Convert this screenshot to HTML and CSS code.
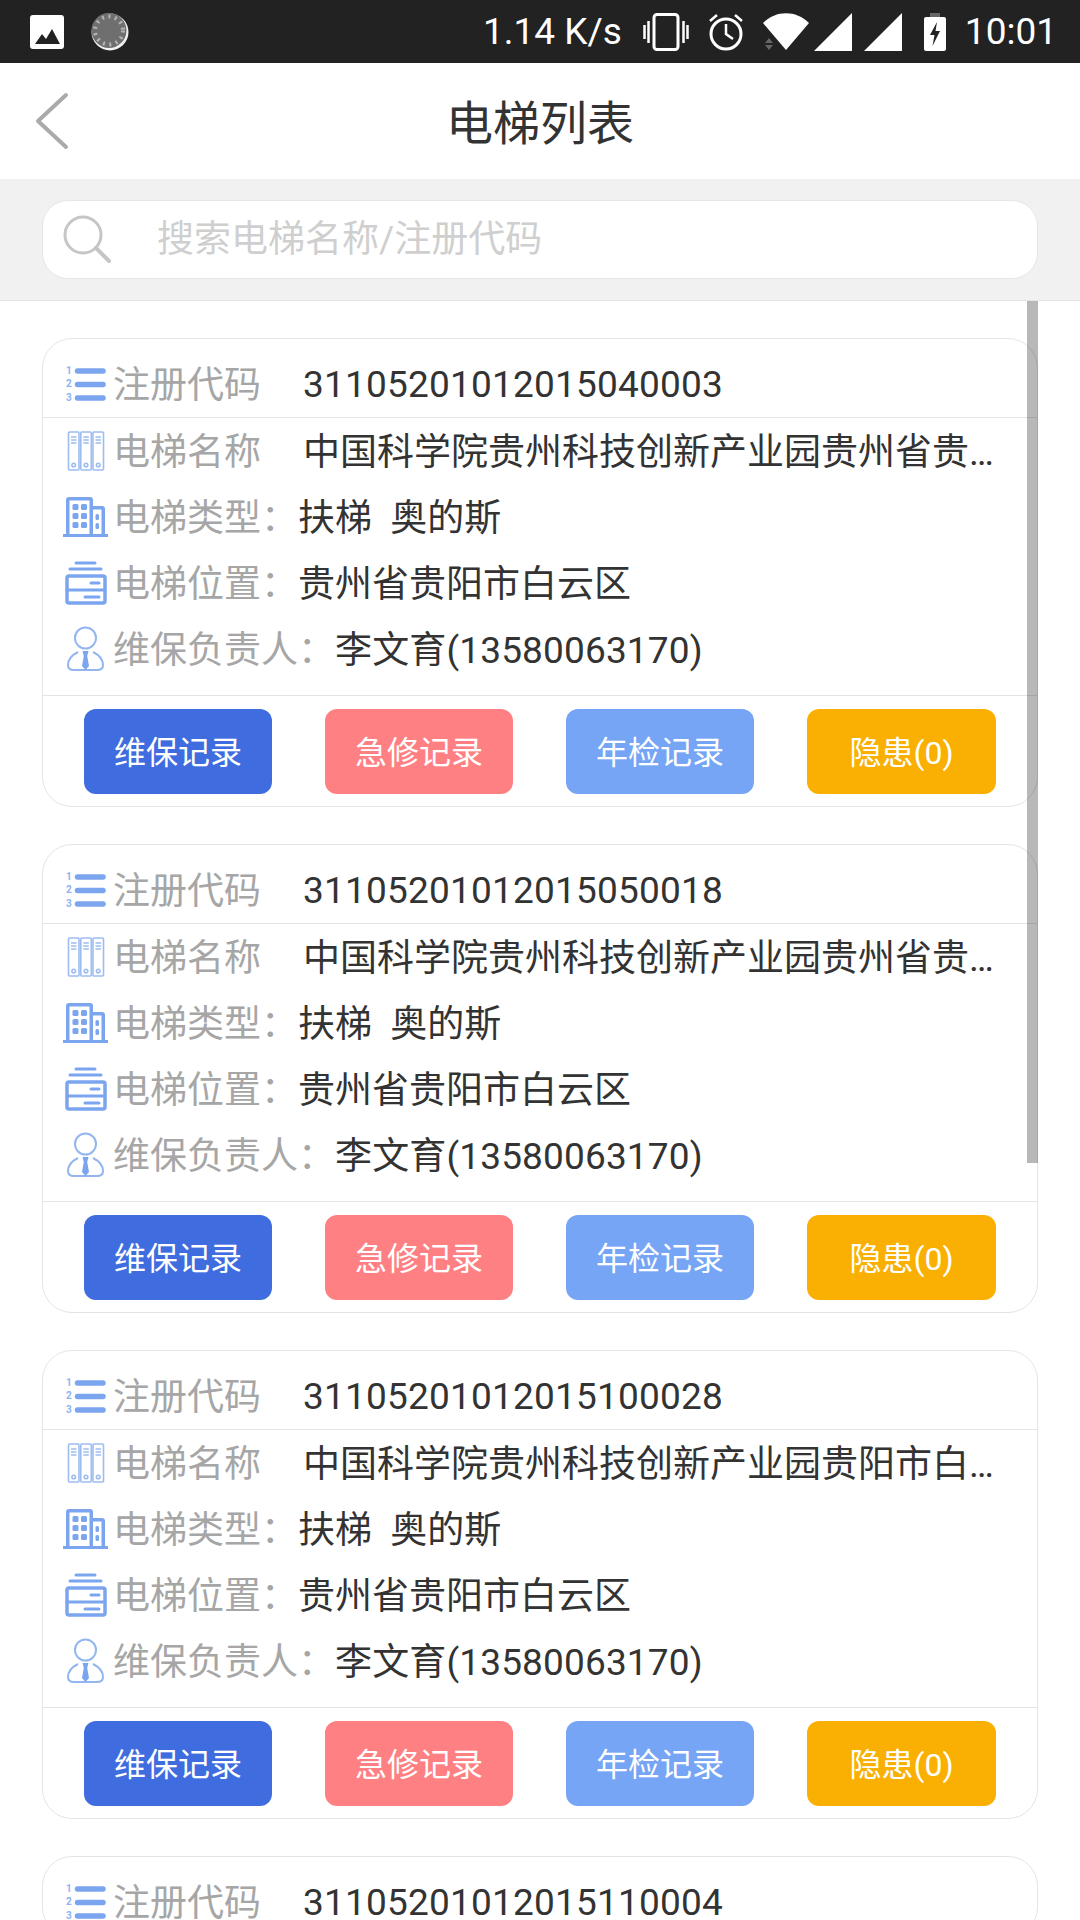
FILE: index.html
```html
<!DOCTYPE html>
<html lang="zh-CN">
<head>
    <meta charset="UTF-8">
    <meta name="viewport" content="width=device-width, initial-scale=1.0">
    <title>电梯列表</title>
    <link rel="stylesheet" href="styles.css">
</head>
<body>
    <!-- Иконки строк карточки -->
    <svg class="icon-defs" aria-hidden="true">
        <symbol id="i-list" viewBox="0 0 48 48">
            <g fill="#8fb3f0" font-family="Roboto, sans-serif" font-size="10" font-weight="700">
                <text x="4" y="14">1</text>
                <text x="4" y="27">2</text>
                <text x="4" y="41">3</text>
            </g>
            <g stroke="#7ba5ee" stroke-width="5.5" stroke-linecap="round">
                <path d="M15.500 11H41M15.500 24.500H41M15.500 38H41"/>
            </g>
        </symbol>
        <symbol id="i-books" viewBox="0 0 48 48">
            <g fill="none" stroke="#9dbdf2" stroke-width="1.6">
                <rect x="6.5" y="5" width="10.5" height="38" rx="1"/>
                <rect x="18.8" y="5" width="10.5" height="38" rx="1"/>
                <rect x="31" y="5" width="10.5" height="38" rx="1"/>
                <path d="M9 10H14.5M9 13H14.5M9 16H14.5M21.3 10H26.8M21.3 13H26.8M21.3 16H26.8M33.5 10H39M33.5 13H39M33.5 16H39"/>
                <circle cx="11.7" cy="38" r="1.8"/>
                <circle cx="24" cy="38" r="1.8"/>
                <circle cx="36.2" cy="38" r="1.8"/>
            </g>
        </symbol>
        <symbol id="i-building" viewBox="0 0 48 48">
            <path fill="#7ba5ee" fill-rule="evenodd" d="M7 4H28Q31 4 31 7V13H40Q43 13 43 16V41H46V44H1V41H4V7Q4 4 7 4ZM7.500 7.500V41H27.500V7.500ZM31 16.500V41H39.500V16.500Z"/>
            <g fill="#7ba5ee">
                <rect x="10.500" y="11" width="6" height="6" rx="1.500"/>
                <rect x="19" y="11" width="6" height="6" rx="1.500"/>
                <rect x="10.500" y="20" width="6" height="6" rx="1.500"/>
                <rect x="19" y="20" width="6" height="6" rx="1.500"/>
                <rect x="10.500" y="29" width="6" height="6" rx="1.500"/>
                <rect x="19" y="29" width="6" height="6" rx="1.500"/>
                <rect x="33.500" y="21" width="3.500" height="6" rx="1.500"/>
                <rect x="33.500" y="30" width="3.500" height="6" rx="1.500"/>
            </g>
        </symbol>
        <symbol id="i-drawer" viewBox="0 0 48 48">
            <g fill="none" stroke="#7ba5ee" stroke-linecap="round">
                <path stroke-width="3" d="M14 4H33M8 10H39"/>
                <rect x="5" y="17" width="38" height="27" rx="2" stroke-width="3.500"/>
                <path stroke-width="3" d="M5 31H43M29 24H37M23 38H37"/>
            </g>
        </symbol>
        <symbol id="i-person" viewBox="0 0 48 48">
            <g fill="none" stroke="#93b6f0" stroke-width="2">
                <circle cx="23.500" cy="13" r="10.500"/>
                <path d="M16 27C10 30 6 35 6 40C6 44 9 45 12 45H35C38 45 41 44 41 40C41 35 37 30 31 27"/>
            </g>
            <path fill="#7ba5ee" d="M20.500 26H26.500L25.200 31L27 41L23.500 45L20 41L21.800 31Z"/>
        </symbol>
    </svg>

    <div class="page">
        <div class="status-bar">
            <div class="status-left">
                <svg class="st-photo" viewBox="0 0 34 34">
                    <rect width="34" height="34" rx="3" fill="#fff"/>
                    <path fill="#222" d="M5 29L12 19L16 24L22 14L30 29Z"/>
                </svg>
                <svg class="st-load" viewBox="0 0 38 38">
                    <circle cx="19" cy="19" r="18.500" fill="#f2f2f2"/>
                    <circle cx="18" cy="17.500" r="17.500" fill="#6f6f6f"/>
                    <circle cx="18" cy="17.500" r="14" fill="none" stroke="#b5b5b5" stroke-width="4" stroke-dasharray="2 4.500"/>
                </svg>
            </div>
            <div class="status-right">
                <span class="st-speed">1.14 K/s</span>
                <svg class="st-vibrate" viewBox="0 0 46 38">
                    <rect x="11" y="1.500" width="24" height="35" rx="3" fill="none" stroke="#fff" stroke-width="3"/>
                    <path stroke="#fff" stroke-width="2.500" d="M5.500 8V30M1.500 12V26M40.500 8V30M44.500 12V26"/>
                </svg>
                <svg class="st-alarm" viewBox="0 0 36 38">
                    <circle cx="18" cy="21" r="15" fill="none" stroke="#fff" stroke-width="3"/>
                    <path fill="none" stroke="#fff" stroke-width="2.500" d="M18 11V21L25 26M2 8L9 2M34 8L27 2"/>
                </svg>
                <svg class="st-wifi" viewBox="0 0 46 37">
                    <path fill="#fff" d="M0 10C13 -3 33 -3 46 10L23 37Z"/>
                    <path fill="#666" d="M6 25L10 30H2ZM2 32H10L6 37Z"/>
                </svg>
                <svg class="st-signal" viewBox="0 0 38 38">
                    <path fill="#fff" d="M38 0V38H0Z"/>
                </svg>
                <svg class="st-signal" viewBox="0 0 38 38">
                    <path fill="#fff" d="M38 0V38H0Z"/>
                </svg>
                <svg class="st-battery" viewBox="0 0 22 38">
                    <path fill="#666" d="M6 0H16V4H6Z"/>
                    <rect y="4" width="22" height="34" rx="2" fill="#fff"/>
                    <path fill="#222" d="M13 9L6 22H10.500L8.500 33L16 18H11.500Z"/>
                </svg>
                <span class="st-time">10:01</span>
            </div>
        </div>

        <div class="nav-bar">
            <svg class="nav-back" viewBox="0 0 34 58">
                <path fill="none" stroke="#aaa" stroke-width="4" stroke-linecap="round" stroke-linejoin="round" d="M31 3L3 29L31 55"/>
            </svg>
            <h1 class="nav-title">电梯列表</h1>
        </div>

        <div class="search-bar">
            <div class="search-box">
                <svg class="search-icon" viewBox="0 0 50 50">
                    <circle cx="20" cy="20" r="18" fill="none" stroke="#c6c6c6" stroke-width="3"/>
                    <path stroke="#c6c6c6" stroke-width="4" stroke-linecap="round" d="M33 33L46 46"/>
                </svg>
                <span class="search-placeholder">搜索电梯名称/注册代码</span>
            </div>
        </div>

        <div class="list">
            <div class="scroll-thumb"></div>

            <div class="card">
                <div class="card-head">
                    <svg class="row-icon"><use href="#i-list"/></svg>
                    <span class="label label-wide">注册代码</span>
                    <span class="value value-code">31105201012015040003</span>
                </div>
                <div class="card-body">
                    <div class="row">
                        <svg class="row-icon"><use href="#i-books"/></svg>
                        <span class="label label-wide">电梯名称</span>
                        <span class="value value-name">中国科学院贵州科技创新产业园贵州省贵阳市白云区</span>
                    </div>
                    <div class="row">
                        <svg class="row-icon"><use href="#i-building"/></svg>
                        <span class="label">电梯类型：</span>
                        <span class="value">扶梯&nbsp;&nbsp;奥的斯</span>
                    </div>
                    <div class="row">
                        <svg class="row-icon"><use href="#i-drawer"/></svg>
                        <span class="label">电梯位置：</span>
                        <span class="value">贵州省贵阳市白云区</span>
                    </div>
                    <div class="row">
                        <svg class="row-icon"><use href="#i-person"/></svg>
                        <span class="label">维保负责人：</span>
                        <span class="value value-phone">李文育(13580063170)</span>
                    </div>
                </div>
                <div class="card-actions">
                    <div class="btn btn-blue">维保记录</div>
                    <div class="btn btn-red">急修记录</div>
                    <div class="btn btn-sky">年检记录</div>
                    <div class="btn btn-amber">隐患(0)</div>
                </div>
            </div>

            <div class="card">
                <div class="card-head">
                    <svg class="row-icon"><use href="#i-list"/></svg>
                    <span class="label label-wide">注册代码</span>
                    <span class="value value-code">31105201012015050018</span>
                </div>
                <div class="card-body">
                    <div class="row">
                        <svg class="row-icon"><use href="#i-books"/></svg>
                        <span class="label label-wide">电梯名称</span>
                        <span class="value value-name">中国科学院贵州科技创新产业园贵州省贵阳市白云区</span>
                    </div>
                    <div class="row">
                        <svg class="row-icon"><use href="#i-building"/></svg>
                        <span class="label">电梯类型：</span>
                        <span class="value">扶梯&nbsp;&nbsp;奥的斯</span>
                    </div>
                    <div class="row">
                        <svg class="row-icon"><use href="#i-drawer"/></svg>
                        <span class="label">电梯位置：</span>
                        <span class="value">贵州省贵阳市白云区</span>
                    </div>
                    <div class="row">
                        <svg class="row-icon"><use href="#i-person"/></svg>
                        <span class="label">维保负责人：</span>
                        <span class="value value-phone">李文育(13580063170)</span>
                    </div>
                </div>
                <div class="card-actions">
                    <div class="btn btn-blue">维保记录</div>
                    <div class="btn btn-red">急修记录</div>
                    <div class="btn btn-sky">年检记录</div>
                    <div class="btn btn-amber">隐患(0)</div>
                </div>
            </div>

            <div class="card">
                <div class="card-head">
                    <svg class="row-icon"><use href="#i-list"/></svg>
                    <span class="label label-wide">注册代码</span>
                    <span class="value value-code">31105201012015100028</span>
                </div>
                <div class="card-body">
                    <div class="row">
                        <svg class="row-icon"><use href="#i-books"/></svg>
                        <span class="label label-wide">电梯名称</span>
                        <span class="value value-name">中国科学院贵州科技创新产业园贵阳市白云区</span>
                    </div>
                    <div class="row">
                        <svg class="row-icon"><use href="#i-building"/></svg>
                        <span class="label">电梯类型：</span>
                        <span class="value">扶梯&nbsp;&nbsp;奥的斯</span>
                    </div>
                    <div class="row">
                        <svg class="row-icon"><use href="#i-drawer"/></svg>
                        <span class="label">电梯位置：</span>
                        <span class="value">贵州省贵阳市白云区</span>
                    </div>
                    <div class="row">
                        <svg class="row-icon"><use href="#i-person"/></svg>
                        <span class="label">维保负责人：</span>
                        <span class="value value-phone">李文育(13580063170)</span>
                    </div>
                </div>
                <div class="card-actions">
                    <div class="btn btn-blue">维保记录</div>
                    <div class="btn btn-red">急修记录</div>
                    <div class="btn btn-sky">年检记录</div>
                    <div class="btn btn-amber">隐患(0)</div>
                </div>
            </div>

            <div class="card">
                <div class="card-head">
                    <svg class="row-icon"><use href="#i-list"/></svg>
                    <span class="label label-wide">注册代码</span>
                    <span class="value value-code">31105201012015110004</span>
                </div>
            </div>
        </div>
    </div>
</body>
</html>
```

FILE: styles.css
```css
* {
    box-sizing: border-box;
}

html, body {
    margin: 0;
    padding: 0;
}

body {
    font-family: Roboto, "Noto Sans CJK SC", sans-serif;
    background-color: #fff;
}

.icon-defs {
    display: none;
}

.page {
    width: 1080px;
    height: 1920px;
    overflow: hidden;
}

/* Статус-бар */
.status-bar {
    height: 63px;
    background-color: #222;
    color: #fff;
    display: flex;
    justify-content: space-between;
    align-items: center;
    padding: 0 23px 0 30px;
}

.status-left, .status-right {
    display: flex;
    align-items: center;
}

.st-photo {
    width: 34px;
    height: 34px;
}

.st-load {
    width: 38px;
    height: 38px;
    margin-left: 27px;
}

.st-speed, .st-time {
    font-size: 37px;
    line-height: 40px;
}

.st-vibrate {
    width: 46px;
    height: 38px;
    margin-left: 21px;
}

.st-alarm {
    width: 36px;
    height: 38px;
    margin-left: 19px;
}

.st-wifi {
    width: 46px;
    height: 37px;
    margin-left: 19px;
    margin-right: -7px;
}

.st-signal {
    width: 38px;
    height: 38px;
    margin-left: 12px;
}

.st-battery {
    width: 22px;
    height: 38px;
    margin-left: 22px;
}

.st-time {
    margin-left: 19px;
}

/* Шапка */
.nav-bar {
    height: 116px;
    display: grid;
    grid-template-columns: 1fr auto 1fr;
    align-items: center;
    padding-left: 35px;
}

.nav-back {
    width: 34px;
    height: 58px;
}

.nav-title {
    margin: 0 0 0 -35px;
    padding-bottom: 4px;
    font-size: 47px;
    font-weight: 400;
    color: #333;
}

/* Поиск */
.search-bar {
    height: 122px;
    background-color: #f1f1f1;
    border-bottom: 1px solid #e4e4e4;
    padding: 21px 42px 0 42px;
}

.search-box {
    height: 79px;
    background-color: #fff;
    border: 1px solid #e6e6e6;
    border-radius: 26px;
    display: flex;
    align-items: center;
    padding-left: 20px;
}

.search-icon {
    width: 50px;
    height: 50px;
    margin-top: 1px;
}

.search-placeholder {
    margin-left: 44px;
    padding-bottom: 8px;
    font-size: 37px;
    color: #cfcfcf;
}

/* Список */
.list {
    position: relative;
    padding: 37px 42px 0 42px;
}

.scroll-thumb {
    position: absolute;
    top: 0;
    right: 42px;
    width: 11px;
    height: 862px;
    background-color: rgba(0, 0, 0, 0.28);
}

.card {
    border: 1px solid #e4e4e4;
    border-radius: 30px;
    margin-bottom: 37px;
}

.card-head {
    height: 79px;
    border-bottom: 1px solid #e4e4e4;
    display: flex;
    align-items: center;
    padding: 12px 0 0 19px;
}

.card-body {
    padding: 0 0 13px 19px;
}

.row {
    height: 66px;
    display: flex;
    align-items: center;
}

.row-icon {
    width: 48px;
    height: 48px;
    flex-shrink: 0;
}

.label {
    margin-left: 3px;
    padding-bottom: 4px;
    font-size: 37px;
    color: #a6a6a6;
    white-space: nowrap;
}

.label-wide {
    margin-right: 42px;
}

.value {
    padding-bottom: 4px;
    font-size: 37px;
    color: #333;
    white-space: nowrap;
}

.value-code {
    padding-bottom: 0;
    letter-spacing: 0.2px;
}

.value-phone {
    letter-spacing: 0.15px;
}

.value-name {
    width: 700px;
    overflow: hidden;
    text-overflow: ellipsis;
}

.card-actions {
    height: 111px;
    border-top: 1px solid #e4e4e4;
    display: flex;
    gap: 53px;
    padding: 13px 0 0 41px;
}

.btn {
    width: 188px;
    height: 85px;
    border-radius: 12px;
    padding-bottom: 4px;
    color: #fff;
    font-size: 32px;
    display: flex;
    align-items: center;
    justify-content: center;
}

.btn-blue {
    background-color: #3f6cde;
}

.btn-red {
    background-color: #ff8083;
}

.btn-sky {
    background-color: #76a5f5;
}

.btn-amber {
    width: 189px;
    background-color: #f9b003;
}
```
